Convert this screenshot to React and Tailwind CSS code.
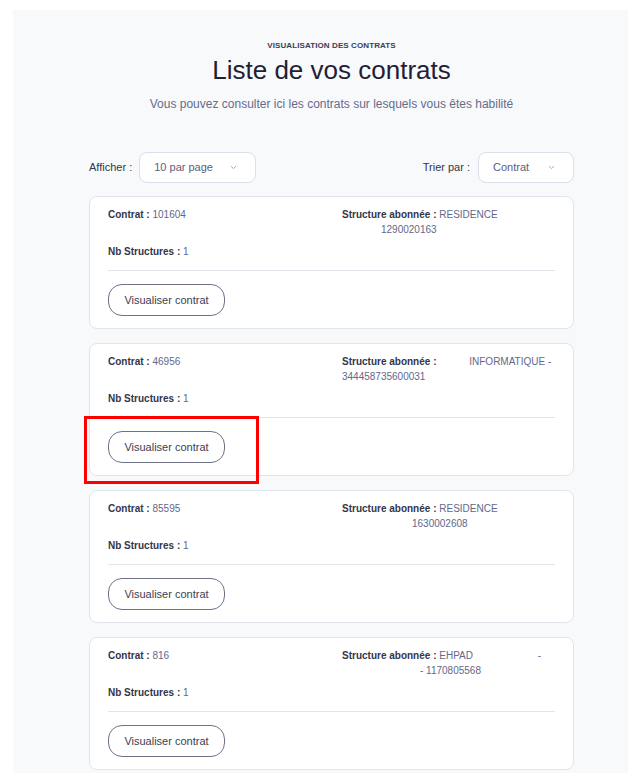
import React from "react";

const contrats = [
  { id: "101604", line1: "RESIDENCE", pad1: 0, line2: "1290020163", pad2: 39 },
  { id: "46956", line1: "INFORMATIQUE -", pad1: 30, line2: "344458735600031", pad2: 0, highlight: true },
  { id: "85595", line1: "RESIDENCE", pad1: 0, line2: "1630002608", pad2: 70 },
  { id: "816", line1: "EHPAD", pad1: 0, tail: "-", line2: "- 1170805568", pad2: 78 },
];

function Chevron() {
  return (
    <svg width="7" height="5" viewBox="0 0 7 5" className="text-[#a3a6b8]">
      <path d="M1 1.2 L3.5 3.6 L6 1.2" fill="none" stroke="currentColor" strokeWidth="1" />
    </svg>
  );
}

function Select({ label, width }) {
  return (
    <div
      className={`flex h-[31px] items-center justify-between rounded-lg border border-[#dcdee9] bg-white pl-[14px] pr-[18px] text-[11px] text-[#5b5e7e] ${width}`}
    >
      <span>{label}</span>
      <Chevron />
    </div>
  );
}

function ContratCard({ c }) {
  return (
    <div className="relative h-[133px] rounded-lg border border-[#e2e4ec] bg-white px-[18px] pt-[10px]">
      <div className="grid grid-cols-[234px_1fr] text-[10px] leading-[15px]">
        <div>
          <span className="font-bold text-[#33354a]">Contrat : </span>
          <span className="text-[#63678a]">{c.id}</span>
        </div>
        <div className="whitespace-nowrap text-[#63678a]">
          <div className="flex">
            <span className="shrink-0 font-bold text-[#33354a]">Structure abonnée :&nbsp;</span>
            {c.pad1 > 0 && <span className="inline-block shrink-0" style={{ width: c.pad1 }} />}
            <span className="shrink-0">{c.line1}</span>
            {c.tail && <span className="ml-auto mr-[14px]">{c.tail}</span>}
          </div>
          <div className="flex">
            {c.pad2 > 0 && <span className="inline-block shrink-0" style={{ width: c.pad2 }} />}
            <span>{c.line2}</span>
          </div>
        </div>
      </div>
      <div className="mt-[7px] text-[10px] leading-[15px]">
        <span className="font-bold text-[#33354a]">Nb Structures : </span>
        <span className="text-[#63678a]">1</span>
      </div>
      <hr className="mt-[11px] border-[#e2e4ec]" />
      <button className="mt-[13px] h-[32px] w-[117px] rounded-[14px] border border-[#6f7286] text-[11px] text-[#3b3e52]">
        Visualiser contrat
      </button>
      {c.highlight && (
        <div className="absolute left-[-6px] top-[72px] h-[68px] w-[175px] border-[3px] border-[#ff0000]" />
      )}
    </div>
  );
}

export default function App() {
  return (
    <div className="h-[781px] bg-white pt-[10px] font-['Liberation_Sans',Arial,sans-serif]">
      <div className="ml-[13px] h-[763px] w-[615px] bg-[#f8f9fb] pl-[76px]">
        <div className="w-[485px]">
          {/* En-tête */}
          <div className="pt-[31px] text-center">
            <p className="text-[8px] font-bold leading-[10px] tracking-[0.1px] text-[#3a3d55]">
              VISUALISATION DES CONTRATS
            </p>
            <h1 className="mt-[4px] text-[26px] leading-[30px] text-[#1f2133]">Liste de vos contrats</h1>
            <p className="mt-[11px] text-[12px] leading-[16px] text-[#676b8a]">
              Vous pouvez consulter ici les contrats sur lesquels vous êtes habilité
            </p>
          </div>

          {/* Filtres */}
          <div className="mt-[40px] flex items-center justify-between">
            <div className="flex items-center gap-[7px]">
              <span className="text-[11px] text-[#33354a]">Afficher :</span>
              <Select label="10 par page" width="w-[117px]" />
            </div>
            <div className="flex items-center gap-[8px]">
              <span className="text-[11px] text-[#33354a]">Trier par :</span>
              <Select label="Contrat" width="w-[96px]" />
            </div>
          </div>

          {/* Liste */}
          <div className="mt-[13px] flex flex-col gap-[14px]">
            {contrats.map((c) => (
              <ContratCard key={c.id} c={c} />
            ))}
          </div>
        </div>
      </div>
    </div>
  );
}
